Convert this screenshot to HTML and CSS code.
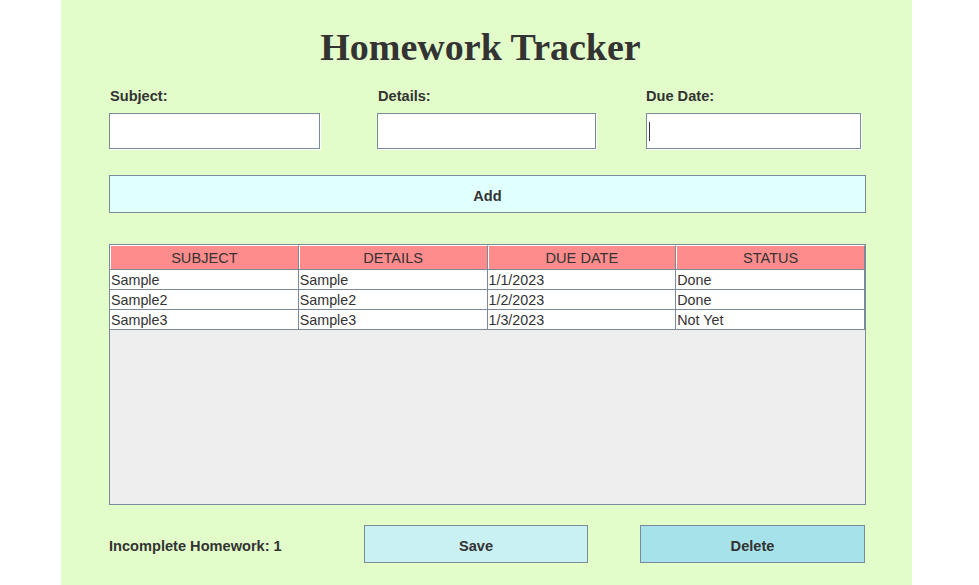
FILE: index.html
```html
<!DOCTYPE html>
<html>
<head>
<meta charset="utf-8">
<link rel="stylesheet" href="styles.css">
</head>
<body>
<div class="panel">
  <h1 class="title">Homework Tracker</h1>
  <div class="fields">
    <div class="field">
      <label class="label">Subject:</label>
      <div class="input w-subject"></div>
    </div>
    <div class="field">
      <label class="label">Details:</label>
      <div class="input w-details"></div>
    </div>
    <div class="field">
      <label class="label">Due Date:</label>
      <div class="input w-due focused"><span class="caret"></span></div>
    </div>
  </div>
  <button class="btn add">Add</button>
  <div class="table-wrap">
    <table class="grid">
      <thead>
        <tr><th>SUBJECT</th><th>DETAILS</th><th>DUE DATE</th><th>STATUS</th></tr>
      </thead>
      <tbody>
        <tr><td>Sample</td><td>Sample</td><td>1/1/2023</td><td>Done</td></tr>
        <tr><td>Sample2</td><td>Sample2</td><td>1/2/2023</td><td>Done</td></tr>
        <tr><td>Sample3</td><td>Sample3</td><td>1/3/2023</td><td>Not Yet</td></tr>
      </tbody>
    </table>
  </div>
  <div class="bottom">
    <div class="count">Incomplete Homework: 1</div>
    <button class="btn save">Save</button>
    <button class="btn delete">Delete</button>
  </div>
</div>
</body>
</html>
```
FILE: styles.css
```css
html, body {
  margin: 0;
  padding: 0;
  background: #ffffff;
  height: 585px;
  overflow: hidden;
}
.panel {
  margin-left: 61px;
  width: 851px;
  height: 585px;
  background: #e2fdc9;
  box-sizing: border-box;
  padding: 25px 46px 0 48px;
  font-family: "Liberation Sans", Arial, sans-serif;
  color: #333333;
}
.title {
  margin: 0;
  font-family: "Liberation Serif", "Times New Roman", serif;
  font-weight: bold;
  font-size: 38px;
  line-height: 44px;
  text-align: center;
  color: #333333;
  width: 757px;
  padding-right: 14px;
  box-sizing: border-box;
}
.fields {
  display: grid;
  grid-template-columns: 220px 220px 220px;
  column-gap: 48px;
  margin-top: 19px;
}
.field {
  display: flex;
  flex-direction: column;
}
.label {
  font-weight: bold;
  font-size: 14.6px;
  line-height: 16px;
  padding-left: 1px;
  margin-bottom: 9px;
}
.input {
  position: relative;
  height: 36px;
  box-sizing: border-box;
  background: #ffffff;
  border: 1px solid #7a8a99;
  box-shadow: 1px 1px 0 #ffffff;
}
.w-subject { width: 211px; }
.w-details { width: 219px; }
.w-due { width: 215px; margin-left: 1px; }
.caret {
  position: absolute;
  left: 2px;
  top: 8px;
  width: 1px;
  height: 19px;
  background: #333333;
}
.btn {
  display: block;
  box-sizing: border-box;
  height: 38px;
  border: 1px solid #7a8a99;
  font-family: "Liberation Sans", Arial, sans-serif;
  font-weight: bold;
  font-size: 14.6px;
  color: #333333;
  padding: 3px 0 0 0;
}
.add {
  width: 757px;
  margin-top: 26px;
  background: #e0ffff;
}
.table-wrap {
  margin-top: 31px;
  width: 757px;
  height: 261px;
  box-sizing: border-box;
  border: 1px solid #7a8a99;
  background: #eeeeee;
}
.grid {
  border-collapse: separate;
  border-spacing: 0;
  width: 755px;
  table-layout: fixed;
  font-size: 14.3px;
  color: #333333;
}
.grid th {
  height: 24px;
  padding: 2px 0 0 0;
  background: #ff8c8c;
  font-weight: normal;
  font-size: 14.6px;
  text-align: center;
  border-right: 1px solid #7a8a99;
  border-left: 1px solid #ffffff;
  border-top: 1px solid #ffffff;
  box-sizing: border-box;
  line-height: 21px;
}
.grid td {
  height: 20px;
  padding: 2px 0 0 1px;
  background: #ffffff;
  border-right: 1px solid #7a8a99;
  border-top: 1px solid #7a8a99;
  box-sizing: border-box;
  line-height: 17px;
  white-space: nowrap;
  overflow: hidden;
}
.grid tbody tr:last-child td {
  border-bottom: 1px solid #7a8a99;
  height: 21px;
}
.bottom {
  display: flex;
  align-items: center;
  margin-top: 20px;
  width: 757px;
}
.count {
  width: 255px;
  font-weight: bold;
  font-size: 14.6px;
  padding-top: 3px;
}
.save {
  width: 224px;
  background: #c9f0f3;
}
.delete {
  width: 225px;
  margin-left: auto;
  margin-right: 1px;
  background: #a6e2e9;
}
```
